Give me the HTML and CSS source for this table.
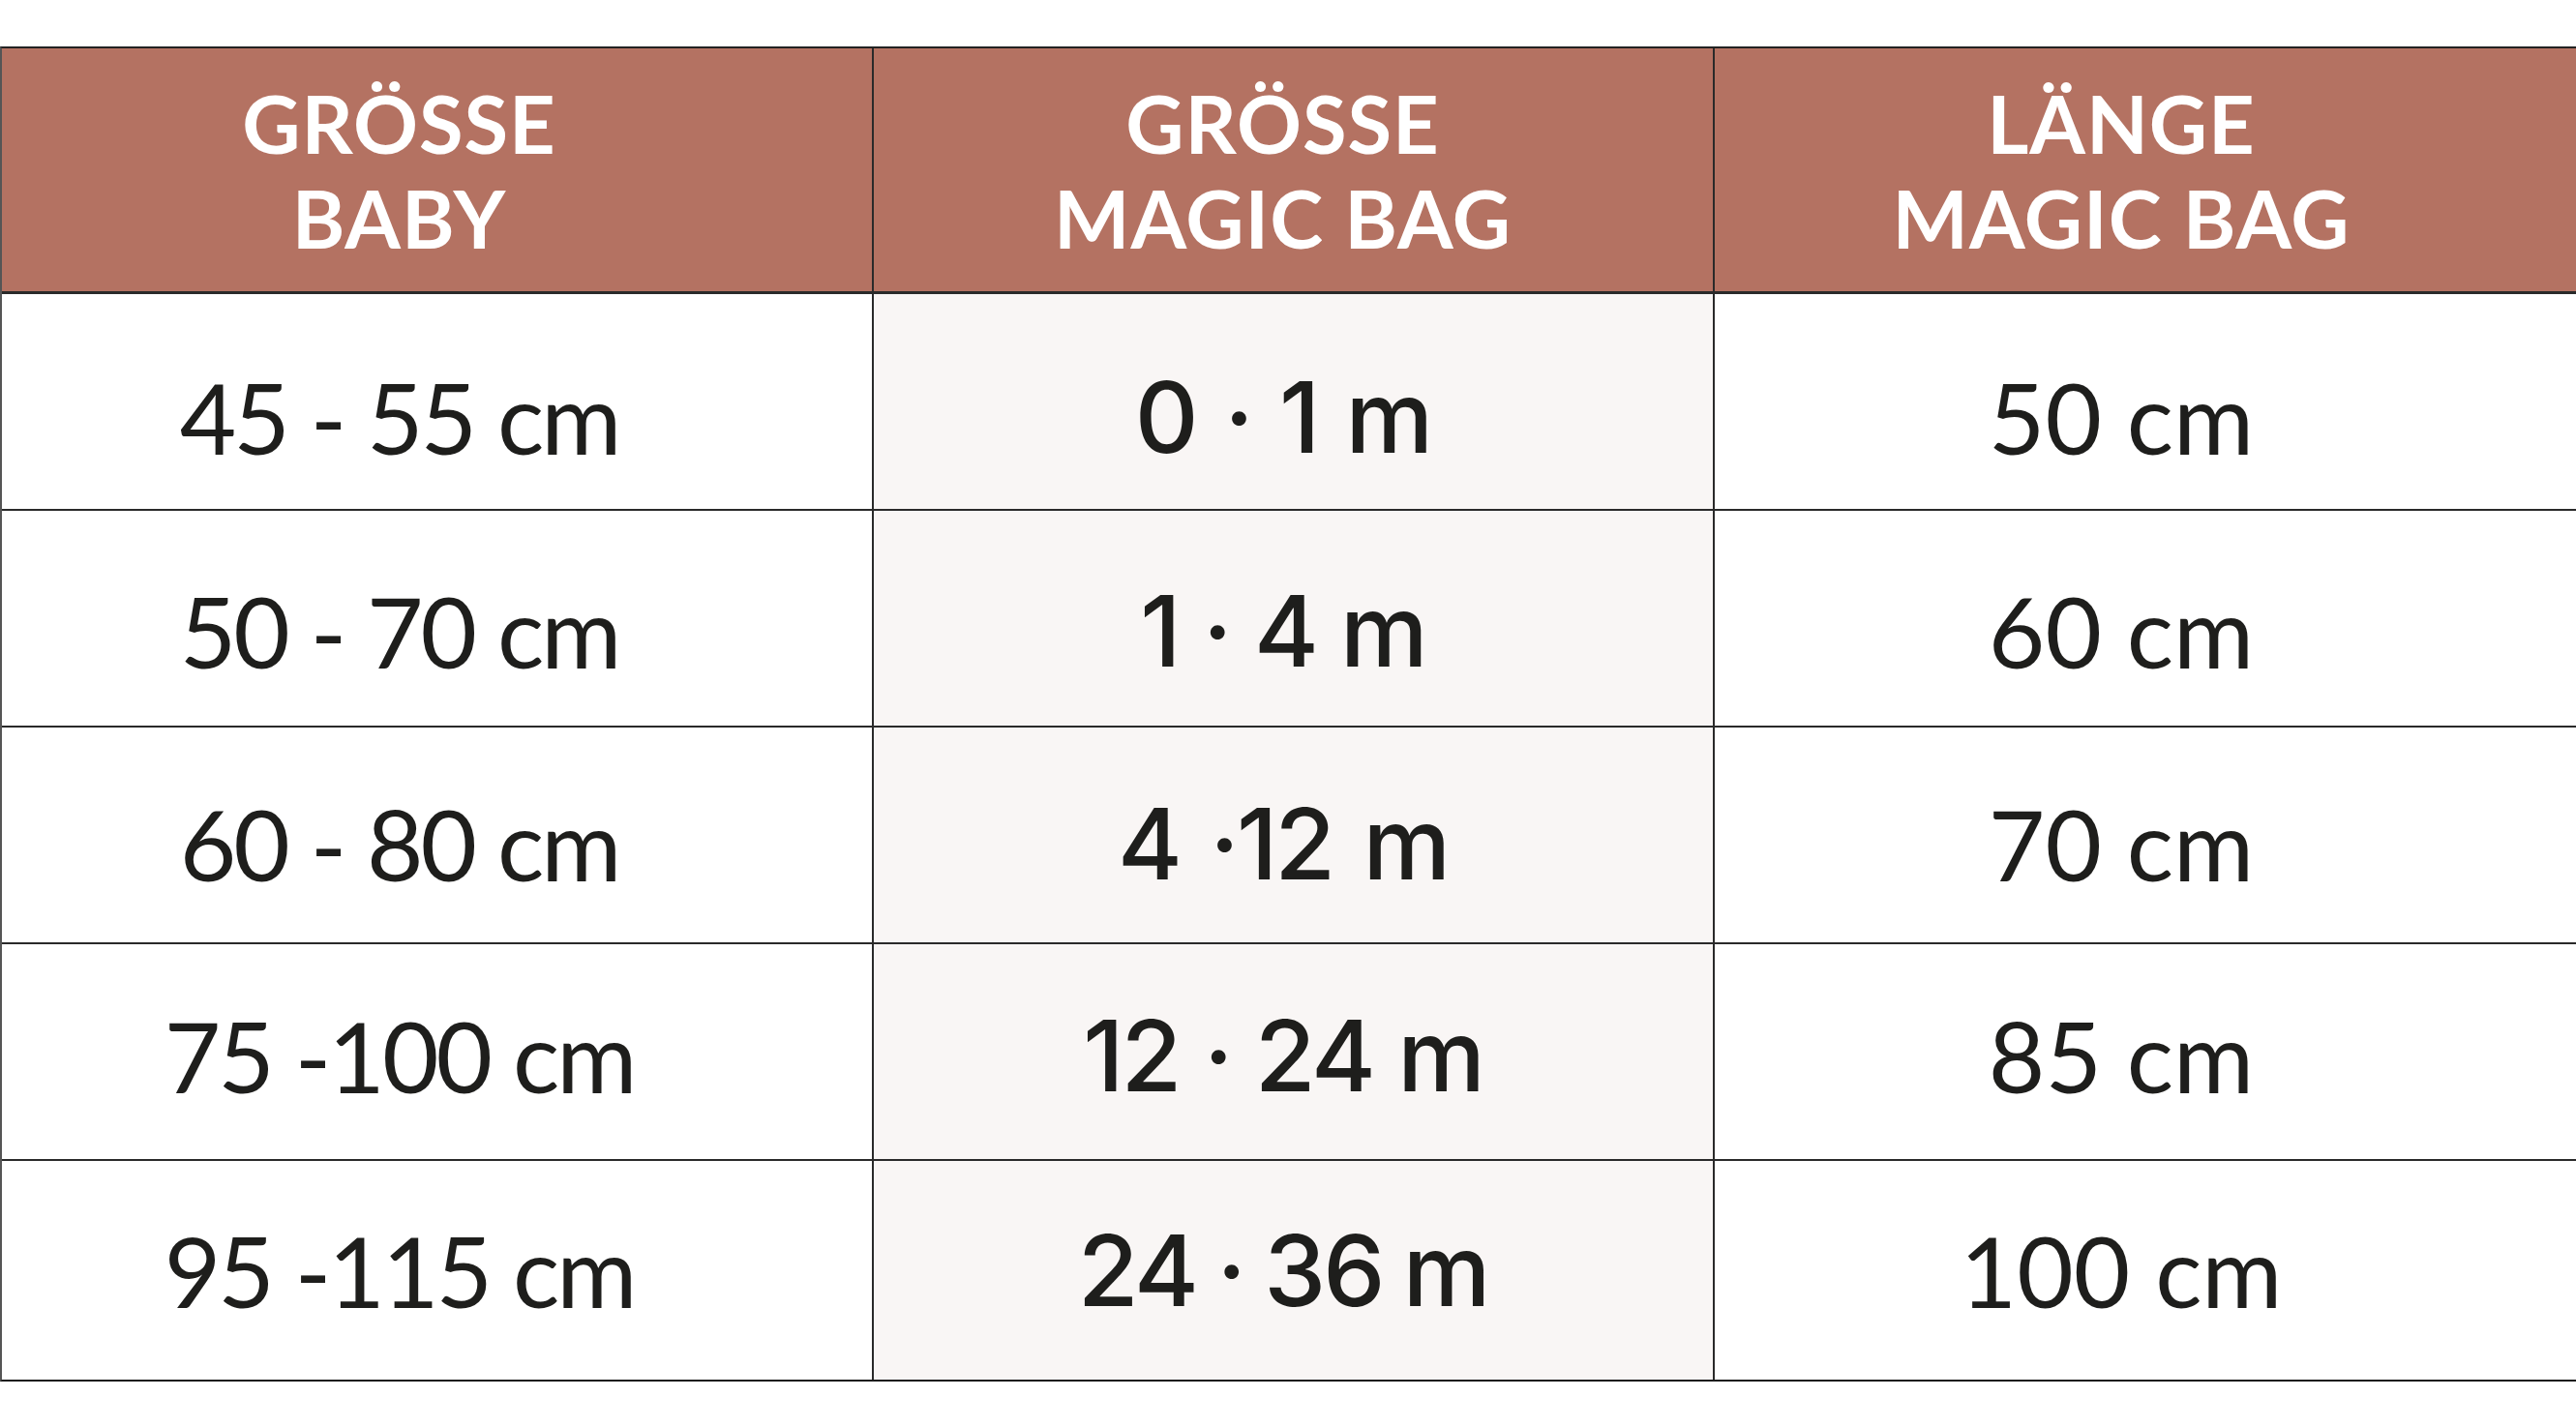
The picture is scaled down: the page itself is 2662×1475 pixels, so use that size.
FILE: index.html
```html
<!DOCTYPE html>
<html lang="de">
<head>
<meta charset="utf-8">
<title>Größentabelle Magic Bag</title>
<link rel="stylesheet" href="styles.css">
</head>
<body>
<div class="size-table">
  <div class="cell head c1">GRÖSSE<br>BABY</div>
  <div class="cell head c2">GRÖSSE<br>MAGIC BAG</div>
  <div class="cell head c3">LÄNGE<br>MAGIC BAG</div>

  <div class="cell body c1 r1">45 - 55 cm</div>
  <div class="cell body mid c2 r1">0 · 1 m</div>
  <div class="cell body c3 r1">50 cm</div>

  <div class="cell body c1 r2">50 - 70 cm</div>
  <div class="cell body mid c2 r2">1 · 4 m</div>
  <div class="cell body c3 r2">60 cm</div>

  <div class="cell body c1 r3">60 - 80 cm</div>
  <div class="cell body mid c2 r3">4 ·12 m</div>
  <div class="cell body c3 r3">70 cm</div>

  <div class="cell body c1 r4">75 -100 cm</div>
  <div class="cell body mid c2 r4">12 · 24 m</div>
  <div class="cell body c3 r4">85 cm</div>

  <div class="cell body c1 r5 last">95 -115 cm</div>
  <div class="cell body mid c2 r5 last">24 · 36 m</div>
  <div class="cell body c3 r5 last">100 cm</div>
</div>
</body>
</html>
```
FILE: styles.css
```css
html, body {
  margin: 0;
  padding: 0;
  background: #ffffff;
}

body {
  padding-top: 48px;
}

.size-table {
  display: grid;
  grid-template-columns: 901px 869px 892px;
  grid-template-rows: 254px repeat(4, 224px) 226px;
  width: 2662px;
  box-sizing: border-box;
  border-top: 2px solid #222;
  border-left: 2px solid #555;
  border-bottom: 2px solid #1a1a1a;
}

.cell {
  box-sizing: border-box;
  display: flex;
  align-items: center;
  justify-content: center;
  text-align: center;
  white-space: pre;
  border-right: 2px solid #2a2a2a;
  border-bottom: 2px solid #2a2a2a;
}

.cell.last {
  border-bottom: none;
}

.c1 { padding-right: 78px; }
.c2 { padding-right: 22px; }
.c3 { padding-right: 50px; }

.head {
  background: #b47262;
  color: #ffffff;
  font-family: "Lato", "Liberation Sans", sans-serif;
  font-weight: 700;
  font-size: 83px;
  line-height: 98px;
  letter-spacing: 1px;
  white-space: normal;
  border-bottom: 3px solid #2a2a2a;
}

.body {
  background: #ffffff;
  color: #1e1e1c;
  font-family: "Lato", "Liberation Sans", sans-serif;
  font-weight: 400;
  font-size: 101px;
  line-height: 103px;
}

.body.c1 {
  letter-spacing: -3px;
  word-spacing: 1px;
}

.body.c3 {
  letter-spacing: 0;
}

.r1 { padding-top: 32px; }
.r2 { padding-top: 26px; }
.r3 { padding-top: 18px; }
.r4 { padding-top: 8px; }
.r5 { padding-top: 0; }

.body.mid {
  background: #f9f6f5;
  font-family: "Inter", "Roboto", sans-serif;
  font-weight: 500;
  font-size: 102px;
  letter-spacing: -3px;
}

.mid.r1 { word-spacing: 5px; }
.mid.r2 { word-spacing: 1px; }
.mid.r3 { word-spacing: 7px; }
.mid.r4 { word-spacing: 1px; }
.mid.r5 { word-spacing: -3px; }
```
